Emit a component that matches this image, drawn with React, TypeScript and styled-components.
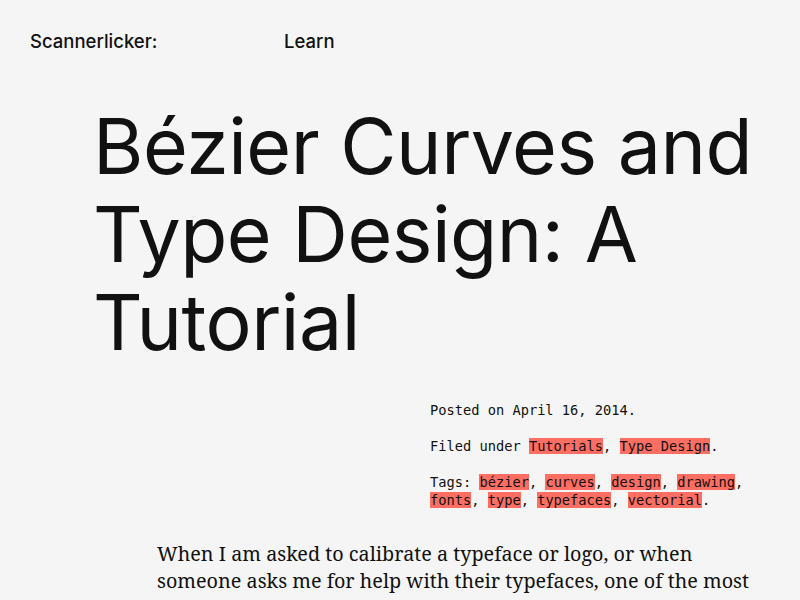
import styled, { createGlobalStyle } from "styled-components"

const Global = createGlobalStyle`
    html, body {
        margin: 0;
        padding: 0;
        background: #f5f5f5;
        color: #111;
    }
`

const Header = styled.header`
    display: flex;
    padding: 30px 30px 0 30px;
    font-family: Inter, "Liberation Sans", sans-serif;
    font-size: 18.5px;
    font-weight: 500;
    line-height: 22px;
    .brand {
        width: 254px;
    }
`

const Title = styled.h1`
    margin: 50px 40px 0 93px;
    font-family: Inter, "Liberation Sans", sans-serif;
    font-weight: 400;
    font-size: 77px;
    line-height: 88px;
    letter-spacing: -0.5px;
    color: #111;
`

const Meta = styled.div`
    margin: 35px 0 0 430px;
    font-family: "DejaVu Sans Mono", monospace;
    font-size: 13.7px;
    line-height: 18px;
    color: #111;
    p {
        margin: 0 0 18px 0;
    }
`

const Tag = styled.a`
    background: #ff6e63;
    color: #111;
    text-decoration: none;
`

const Body = styled.div`
    max-width: 612px;
    margin: 31px 0 0 157px;
    font-family: "Noto Serif", "DejaVu Serif", serif;
    font-size: 19.8px;
    line-height: 27px;
    color: #111;
    p {
        margin: 0;
    }
`

const list = (items: string[]) =>
    items.map((t, i) => (
        <span key={t}>
            <Tag href="#">{t}</Tag>
            {i < items.length - 1 ? ", " : "."}
        </span>
    ))

export default function App() {
    return (
        <>
            <Global />
            <Header>
                <span className="brand">Scannerlicker:</span>
                <span>Learn</span>
            </Header>
            <Title>Bézier Curves and Type Design: A Tutorial</Title>
            <Meta>
                <p>Posted on April 16, 2014.</p>
                <p>Filed under {list(["Tutorials", "Type Design"])}</p>
                <p>Tags: {list(["bézier", "curves", "design", "drawing", "fonts", "type", "typefaces", "vectorial"])}</p>
            </Meta>
            <Body>
                <p>
                    When I am asked to calibrate a typeface or logo, or when someone asks me for help with their typefaces, one of the most common problems I find is bad Bézier curve placing.
                </p>
            </Body>
        </>
    )
}
